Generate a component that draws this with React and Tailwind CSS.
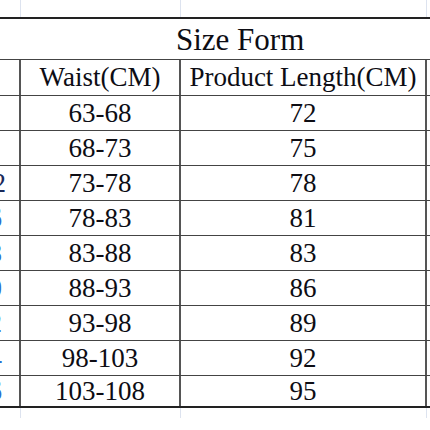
const ROWS = [
  { w: '63-68', len: '72', left: '', pad: 'pr-[13px]', color: 'text-[#1a2a5a]' },
  { w: '68-73', len: '75', left: '', pad: 'pr-[13px]', color: 'text-[#1a2a5a]' },
  { w: '73-78', len: '78', left: '32', pad: 'pr-[13px]', color: 'text-[#1a2a5a]' },
  { w: '78-83', len: '81', left: '36', pad: 'pr-[17px]', color: 'text-[#2b6fd0]' },
  { w: '83-88', len: '83', left: '38', pad: 'pr-[17px]', color: 'text-[#2b6fd0]' },
  { w: '88-93', len: '86', left: '40', pad: 'pr-[17px]', color: 'text-[#2b6fd0]' },
  { w: '93-98', len: '89', left: '42', pad: 'pr-[17px]', color: 'text-[#2b6fd0]' },
  { w: '98-103', len: '92', left: '44', pad: 'pr-[17px]', color: 'text-[#2b6fd0]' },
  { w: '103-108', len: '95', left: '46', pad: 'pr-[17px]', color: 'text-[#2b6fd0]' },
]

const cols = 'grid grid-cols-[21px_160px_246px_1fr]'

function Row({ h, last, children }) {
  return (
    <div className={`${cols} ${h} ${last ? '' : 'border-b-[1.5px] border-[#444]'}`}>
      {children}
    </div>
  )
}

export default function App() {
  return (
    <div
      className="w-[430px] h-[430px] bg-white overflow-hidden text-[#0d0d14] leading-none"
      style={{ fontFamily: '"Liberation Serif", "Times New Roman", serif' }}
    >
      {/* faint grid above */}
      <div className={`${cols} h-[17px]`}>
        <div className="border-r border-[#dde3ef]" />
        <div className="border-r border-[#dde3ef]" />
        <div className="border-r border-[#dde3ef]" />
        <div />
      </div>
      <div className="h-[2px] bg-[#222]" />

      <div className="h-[41px] border-b-[1.5px] border-[#444] flex items-center pl-[176px] text-[31px]">
        Size Form
      </div>

      <Row h="h-[36px]">
        <div className="border-r-2 border-[#555]" />
        <div className="border-r-2 border-[#555] flex items-center justify-center text-[27px]">Waist(CM)</div>
        <div className="border-r-2 border-[#555] flex items-center justify-center text-[27px]">Product Length(CM)</div>
        <div />
      </Row>

      {ROWS.map((r, i) => (
        <Row key={r.w} h={i === ROWS.length - 1 ? 'h-[30px]' : 'h-[35px]'} last={i === ROWS.length - 1}>
          <div className="border-r-2 border-[#555] overflow-hidden flex items-center justify-end">
            <span className={`text-[27px] shrink-0 ${r.pad} ${r.color}`}>{r.left}</span>
          </div>
          <div className="border-r-2 border-[#555] flex items-center justify-center text-[27px]">{r.w}</div>
          <div className="border-r-2 border-[#555] flex items-center justify-center text-[27px]">{r.len}</div>
          <div />
        </Row>
      ))}

      <div className="h-[2px] bg-[#222]" />
      <div className={`${cols} h-[10px]`}>
        <div className="border-r border-[#dde3ef]" />
        <div className="border-r border-[#dde3ef]" />
        <div className="border-r border-[#dde3ef]" />
        <div />
      </div>
    </div>
  )
}
